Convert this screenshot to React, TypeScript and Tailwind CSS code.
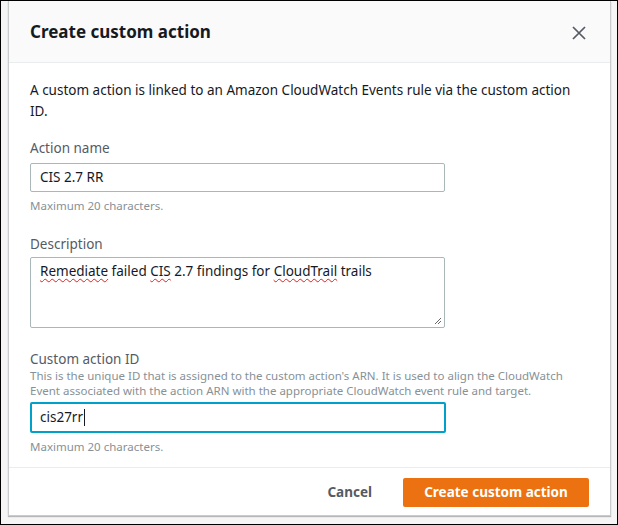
import React from "react";

const font = { fontFamily: "'Noto Sans', 'Open Sans', Arial, sans-serif" };

const Hint = ({ children }: { children: React.ReactNode }) => (
  <p className="text-[11.5px] leading-[15px] text-[#879196]">{children}</p>
);

const Typo = ({ children }: { children: React.ReactNode }) => (
  <span className="underline decoration-[#e02020] decoration-wavy decoration-1 underline-offset-2">{children}</span>
);

export default function App() {
  return (
    <div
      style={font}
      className="relative h-[525px] w-[618px] overflow-hidden border border-black bg-[#f5f5f5]"
    >
      <div className="relative ml-[7px] flex h-[515px] w-[603px] flex-col border-x border-b border-[#c8cccc] bg-white shadow-[0_1px_1px_rgba(0,0,0,0.25)]">
        {/* header */}
        <div className="flex h-[62px] items-center justify-between border-b border-[#eaeded] bg-[#fafafa] pl-[21px] pr-[24px]">
          <h2 className="text-[17px] font-bold text-[#16191f]">Create custom action</h2>
          <svg width="14" height="14" viewBox="0 0 14 14" className="mt-[2px] text-[#545b64]">
            <path d="M1 1L13 13M13 1L1 13" stroke="currentColor" strokeWidth="1.7" fill="none" />
          </svg>
        </div>

        {/* body */}
        <div className="flex flex-1 flex-col pl-[21px] pr-[22px] pt-[17px] text-[13.5px] text-[#16191f]">
          <p className="leading-[21px]">
            A custom action is linked to an Amazon CloudWatch Events rule via the custom action ID.
          </p>

          <label className="mt-[16px] leading-[20px] text-[#545b64]">Action name</label>
          <div className="mt-[5px] flex h-[29px] w-[415px] items-center rounded-[2px] border border-[#aab7b8] px-[9px]">
            CIS 2.7 RR
          </div>
          <div className="mt-[6px]">
            <Hint>Maximum 20 characters.</Hint>
          </div>

          <label className="mt-[21px] leading-[20px] text-[#545b64]">Description</label>
          <div className="relative mt-[3px] h-[71px] w-[415px] rounded-[2px] border border-[#aab7b8] px-[9px] pt-[3px]">
            <Typo>Remediate</Typo> failed <Typo>CIS</Typo> 2.7 findings for <Typo>CloudTrail</Typo> trails
            <svg width="8" height="8" viewBox="0 0 8 8" className="absolute bottom-[2px] right-[2px]">
              <path d="M7 1L1 7M7 4L4 7" stroke="#666" strokeWidth="1" />
            </svg>
          </div>

          <label className="mt-[21px] leading-[20px] text-[#545b64]">Custom action ID</label>
          <div className="-mt-[1px] w-[545px]">
            <Hint>
              This is the unique ID that is assigned to the custom action's ARN. It is used to align the CloudWatch
              Event associated with the action ARN with the appropriate CloudWatch event rule and target.
            </Hint>
          </div>
          <div className="mt-[4px] flex h-[31px] w-[416px] items-center rounded-[2px] border-2 border-[#00a1c9] px-[8px]">
            cis27rr<span className="ml-[1px] inline-block h-[17px] w-px bg-[#16191f]" />
          </div>
          <div className="mt-[6px]">
            <Hint>Maximum 20 characters.</Hint>
          </div>
        </div>

        {/* footer */}
        <div className="flex h-[48px] items-center justify-end gap-[31px] border-t border-[#eaeded] pr-[21px] pt-[1px]">
          <span className="text-[13.5px] font-bold text-[#545b64]">Cancel</span>
          <button className="h-[29px] w-[186px] rounded-[2px] bg-[#ec7211] text-[13.5px] font-bold text-white">
            Create custom action
          </button>
        </div>
      </div>
    </div>
  );
}
